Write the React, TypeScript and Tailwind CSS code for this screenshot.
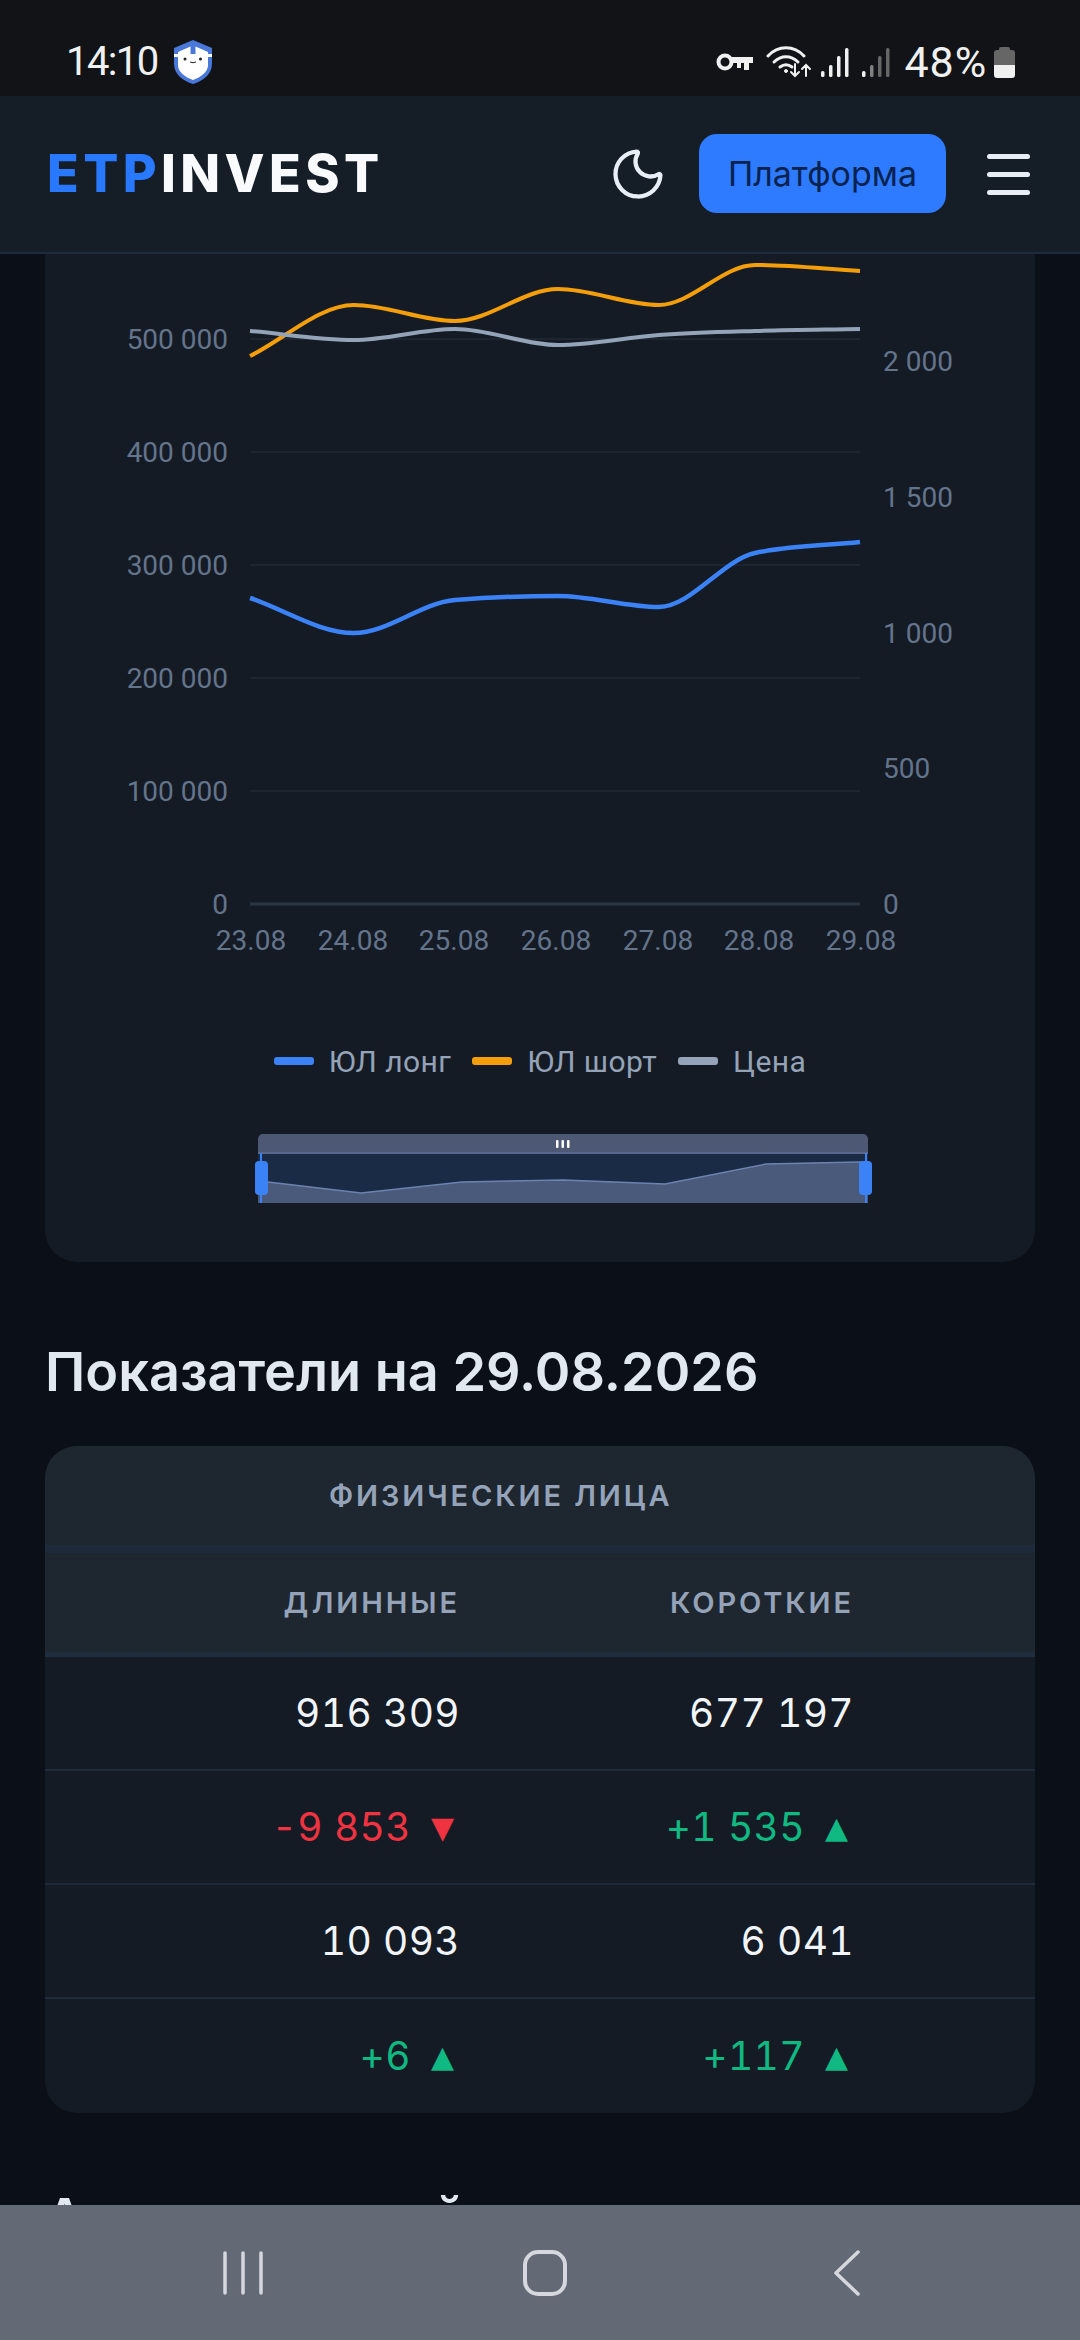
import React from 'react';
import { Moon } from 'lucide-react';

type Pt = [number, number];

// monotone-x interpolation, same shape the chart lib gives
function smoothPath(pts: Pt[]) {
  const n = pts.length;
  const slopes: number[] = [];
  for (let i = 0; i < n - 1; i++) {
    slopes.push((pts[i + 1][1] - pts[i][1]) / (pts[i + 1][0] - pts[i][0]));
  }
  const tangents: number[] = pts.map((_, i) => {
    if (i === 0) return slopes[0];
    if (i === n - 1) return slopes[n - 2];
    if (slopes[i - 1] * slopes[i] <= 0) return 0;
    const h0 = pts[i][0] - pts[i - 1][0];
    const h1 = pts[i + 1][0] - pts[i][0];
    const p = (slopes[i - 1] * h1 + slopes[i] * h0) / (h0 + h1);
    return (
      (Math.sign(slopes[i - 1]) + Math.sign(slopes[i])) *
      Math.min(Math.abs(slopes[i - 1]), Math.abs(slopes[i]), 0.5 * Math.abs(p))
    );
  });
  let d = `M${pts[0][0]} ${pts[0][1]}`;
  for (let i = 0; i < n - 1; i++) {
    const dx = (pts[i + 1][0] - pts[i][0]) / 3;
    d += `C${pts[i][0] + dx} ${pts[i][1] + tangents[i] * dx} ${pts[i + 1][0] - dx} ${pts[i + 1][1] - tangents[i + 1] * dx} ${pts[i + 1][0]} ${pts[i + 1][1]}`;
  }
  return d;
}

const XS = [250, 354, 455, 558, 659, 755, 860];
const ORANGE = [356, 305, 321, 289, 305, 265, 271];
const GRAY = [331, 340, 329, 345, 335, 331, 329];
const BLUE = [598, 633, 600, 596, 607, 553, 542];
const series = (ys: number[]) => ys.map((y, i) => [XS[i], y] as Pt);

const LEFT_TICKS: [string, number][] = [
  ['500 000', 339],
  ['400 000', 452],
  ['300 000', 565],
  ['200 000', 678],
  ['100 000', 791],
  ['0', 904],
];
const RIGHT_TICKS: [string, number][] = [
  ['2 000', 361],
  ['1 500', 497],
  ['1 000', 633],
  ['500', 768],
  ['0', 904],
];
const DATES: [string, number][] = [
  ['23.08', 251],
  ['24.08', 353],
  ['25.08', 454],
  ['26.08', 556],
  ['27.08', 658],
  ['28.08', 759],
  ['29.08', 861],
];

const LEGEND = [
  { name: 'ЮЛ лонг', color: 'bg-[#3b82f6]' },
  { name: 'ЮЛ шорт', color: 'bg-[#f59e0b]' },
  { name: 'Цена', color: 'bg-[#94a3b8]' },
];

const RED = 'text-[#ef3340]';
const GREEN = 'text-[#10b981]';

const ROWS = [
  [{ value: '916 309' }, { value: '677 197' }],
  [
    { value: '-9 853', arrow: '▼', color: RED },
    { value: '+1 535', arrow: '▲', color: GREEN },
  ],
  [{ value: '10 093' }, { value: '6 041' }],
  [
    { value: '+6', arrow: '▲', color: GREEN },
    { value: '+117', arrow: '▲', color: GREEN },
  ],
];

const StatusBar = () => (
  <div className="h-[96px] pt-[28px] bg-[#111317] flex items-center justify-between pl-[66px] pr-[65px] text-[#f0f0f0] text-[40px] [font-family:Roboto,sans-serif]">
    <div className="flex items-center gap-[16px]">
      <span className="leading-none tracking-[-0.04em]">14:10</span>
      <svg width="38" height="44" viewBox="0 0 38 44">
        <path d="M19 0 38 8v16c0 10-9 17-19 20C9 41 0 34 0 24V8Z" fill="#4a78d8" />
        <path d="M4 12 16.500 6.500V15h5V6.500L34 12v13c0 7-7 12-15 15C11 37 4 32 4 25Z" fill="#fff" />
        <rect x="0" y="14" width="38" height="3" fill="#fff" />
        <circle cx="11" cy="19" r="1.500" fill="#222" />
        <circle cx="26.500" cy="19" r="1.500" fill="#222" />
        <path d="M16 22q3 1.500 6 0" stroke="#222" strokeWidth="1" fill="none" />
      </svg>
    </div>
    <div className="flex items-center">
      <svg width="37" height="20" viewBox="0 0 37 20" fill="none" stroke="#f0f0f0">
        <circle cx="9" cy="10" r="6.500" strokeWidth="4" />
        <path d="M16 5h21v6h-4v7h-5v-7h-3v5h-4v-5h-5Z" fill="#f0f0f0" strokeWidth="0" />
      </svg>
      <svg className="ml-[13px]" width="46" height="34" viewBox="0 0 46 34" fill="none" stroke="#f0f0f0" strokeWidth="3" strokeLinecap="round">
        <path d="M2 11C12 0 28 0 38 11" />
        <path d="M8 17c7-7 17-7 24 0" />
        <path d="M14 22c4-3 8-3 12 0" />
        <circle cx="20" cy="26" r="1.500" fill="#f0f0f0" strokeWidth="1" />
        <path d="M29 19v12m-4-4 4 4 4-4M40 31V20m-4 4 4-4 4 4" strokeWidth="2" />
      </svg>
      <svg className="ml-[9px]" width="28" height="30" viewBox="0 0 28 30" fill="#f0f0f0">
        <rect x="0" y="24" width="3.500" height="6" rx="1.500" />
        <rect x="8" y="18" width="3.500" height="12" rx="1.500" />
        <rect x="16" y="9" width="3.500" height="21" rx="1.500" />
        <rect x="24" y="1" width="3.500" height="29" rx="1.500" />
      </svg>
      <svg className="ml-[13px]" width="28" height="30" viewBox="0 0 28 30">
        <rect x="0" y="24" width="3.500" height="6" rx="1.500" fill="#f0f0f0" />
        <rect x="8" y="18" width="3.500" height="12" rx="1.500" fill="#808080" />
        <rect x="16" y="9" width="3.500" height="21" rx="1.500" fill="#666" />
        <rect x="24" y="1" width="3.500" height="29" rx="1.500" fill="#666" />
      </svg>
      <span className="ml-[15px] leading-none text-[43px] tracking-[0.02em]">48%</span>
      <div className="ml-[7px] w-[21px] h-[31px] flex flex-col items-center">
        <div className="w-[11px] h-[3px] bg-[#666] rounded-t-[2px]" />
        <div className="w-full flex-1 flex flex-col rounded-[3px] overflow-hidden">
          <div className="flex-1 bg-[#666]" />
          <div className="h-[13px] bg-[#f0f0f0]" />
        </div>
      </div>
    </div>
  </div>
);

const Header = () => (
  <div className="h-[158px] bg-[#151d27] border-b-2 border-[#1e2a3d] flex items-center pl-[47px] pr-[50px] [font-family:Inter,sans-serif]">
    <div className="text-[52px] font-extrabold tracking-[0.085em] leading-none">
      <span className="text-[#2979ff]">ETP</span>
      <span className="text-[#f8fafc]">INVEST</span>
    </div>
    <Moon className="ml-auto text-[#e8eef6]" size={60} strokeWidth={1.7} />
    <button className="ml-[31px] -mt-[2px] w-[247px] h-[79px] rounded-[18px] bg-[#2e7bff] text-[#08234f] text-[34px] font-normal">
      Платформа
    </button>
    <div className="ml-[41px] w-[43px] flex flex-col gap-[13px]">
      <div className="h-[5px] rounded-full bg-[#e8eef6]" />
      <div className="h-[5px] rounded-full bg-[#e8eef6]" />
      <div className="h-[5px] rounded-full bg-[#e8eef6]" />
    </div>
  </div>
);

const tickCls = 'fill-[#64748b] text-[28px] [font-family:Roboto,sans-serif]';

const ChartCard = () => (
  <div className="h-[1008px] bg-[#141b25] rounded-b-[32px]">
    {/* viewBox uses page coordinates, easier to compare against the screenshot */}
    <svg className="block" width="990" height="787" viewBox="45 254 990 787">
      {LEFT_TICKS.map(([label, y]) => (
        <g key={label}>
          <line x1="250" x2="860" y1={y} y2={y} stroke={y === 904 ? '#2a3442' : '#1c2530'} strokeWidth={y === 904 ? 3 : 2} />
          <text className={tickCls} x="228" y={y + 10} textAnchor="end">{label}</text>
        </g>
      ))}
      {RIGHT_TICKS.map(([label, y]) => (
        <text key={label} className={tickCls} x="883" y={y + 10}>{label}</text>
      ))}
      {DATES.map(([label, x]) => (
        <text key={label} className={tickCls} x={x} y="950" textAnchor="middle">{label}</text>
      ))}
      <path d={smoothPath(series(ORANGE))} fill="none" stroke="#f59e0b" strokeWidth="4" />
      <path d={smoothPath(series(GRAY))} fill="none" stroke="#94a3b8" strokeWidth="4" />
      <path d={smoothPath(series(BLUE))} fill="none" stroke="#3b82f6" strokeWidth="4.500" />
    </svg>
    <div className="h-[40px] flex items-center justify-center gap-[21px] text-[#94a3b8] text-[30px] tracking-[0.015em] [font-family:Roboto,sans-serif]">
      {LEGEND.map((l) => (
        <div key={l.name} className="flex items-center gap-[15px]">
          <div className={`w-[40px] h-[8px] rounded-[3px] ${l.color}`} />
          <span>{l.name}</span>
        </div>
      ))}
    </div>
    <svg className="block mt-[53px]" width="990" height="70" viewBox="45 1134 990 70">
      <rect x="258" y="1153" width="610" height="50" fill="#1a2b45" />
      <path d="M268 1182 361 1193 462 1182 563 1180 665 1184 766 1164 859 1162 868 1162V1203H258V1182Z" fill="#4a5a7a" />
      <path d="M258 1181 268 1182 361 1193 462 1182 563 1180 665 1184 766 1164 859 1162 868 1162" fill="none" stroke="#6d82b0" strokeWidth="1.500" />
      <path d="M258 1153V1139a5 5 0 0 1 5-5H863a5 5 0 0 1 5 5V1153Z" fill="#4d5875" />
      <rect x="258" y="1152" width="610" height="2" fill="#5a6890" />
      <rect x="556" y="1140" width="2.500" height="8" rx="1" fill="#fff" />
      <rect x="561.500" y="1140" width="2.500" height="8" rx="1" fill="#fff" />
      <rect x="567" y="1140" width="2.500" height="8" rx="1" fill="#fff" />
      <rect x="260" y="1153" width="2" height="50" fill="#3b82f6" />
      <rect x="865" y="1153" width="2" height="50" fill="#3b82f6" />
      <rect x="255" y="1161" width="13" height="34" rx="4" fill="#3b82f6" />
      <rect x="859" y="1161" width="13" height="34" rx="4" fill="#3b82f6" />
    </svg>
  </div>
);

const StatsTable = () => (
  <div className="rounded-[32px] overflow-hidden bg-[#141b25] [font-family:Inter,sans-serif]">
    <div className="h-[107px] bg-[#1e2630] border-b-[8px] border-[#1c2a3a] flex items-center pl-[284px] text-[#94a3b8] text-[29px] font-semibold tracking-[0.1em] uppercase">
      Физические лица
    </div>
    <div className="h-[104px] bg-[#1e2630] border-b-[5px] border-[#1e2c3e] grid grid-cols-[415px_394px] items-center text-right text-[#94a3b8] text-[29px] font-semibold tracking-[0.1em] uppercase">
      <span>Длинные</span>
      <span>Короткие</span>
    </div>
    {ROWS.map((row, i) => (
      <div
        key={row[0].value}
        className={`h-[114px] grid grid-cols-[415px_394px] items-center text-right text-[39px] tabular-nums tracking-[0.01em] text-[#f1f5f9] ${i < 3 ? 'border-b-2 border-[#1e2a3a]' : ''}`}
      >
        {row.map((cell) => (
          <span key={cell.value} className={cell.color}>
            {cell.value}
            {cell.arrow && (
              <span className="ml-[20px] mr-[6px] text-[30px] tracking-normal align-[3px] [font-family:'DejaVu_Sans',sans-serif]">
                {cell.arrow}
              </span>
            )}
          </span>
        ))}
      </div>
    ))}
  </div>
);

const NavBar = () => (
  <div className="h-[135px] bg-[#646a75] grid grid-cols-3 pl-[92px] pr-[82px] items-center justify-items-center">
    <svg width="40" height="44" viewBox="0 0 40 44" stroke="#d5d8de" strokeWidth="3.500" strokeLinecap="round">
      <path d="M2 2v40M20 2v40M38 2v40" />
    </svg>
    <svg width="44" height="46" viewBox="0 0 44 46" fill="none" stroke="#d5d8de" strokeWidth="4">
      <rect x="2" y="2" width="40" height="42" rx="13" />
    </svg>
    <svg width="28" height="46" viewBox="0 0 28 46" fill="none" stroke="#d5d8de" strokeWidth="3.500" strokeLinecap="round" strokeLinejoin="round">
      <path d="M25 2 3 23l22 21" />
    </svg>
  </div>
);

export default function App() {
  return (
    <div className="h-[2340px] flex flex-col overflow-hidden bg-[#0b0f17]">
      <StatusBar />
      <Header />
      <main className="flex-1 min-h-0 overflow-hidden px-[45px]">
        <ChartCard />
        <h2 className="mt-[78px] text-[54px] leading-[64px] font-semibold text-[#e2e8f0] [font-family:Inter,sans-serif]">
          Показатели на 29.08.2026
        </h2>
        <div className="mt-[42px]">
          <StatsTable />
        </div>
        <h2 className="mt-[73px] text-[54px] leading-[64px] font-semibold text-[#e2e8f0] [font-family:Inter,sans-serif]">
          Аналитический отчет
        </h2>
      </main>
      <NavBar />
    </div>
  );
}
